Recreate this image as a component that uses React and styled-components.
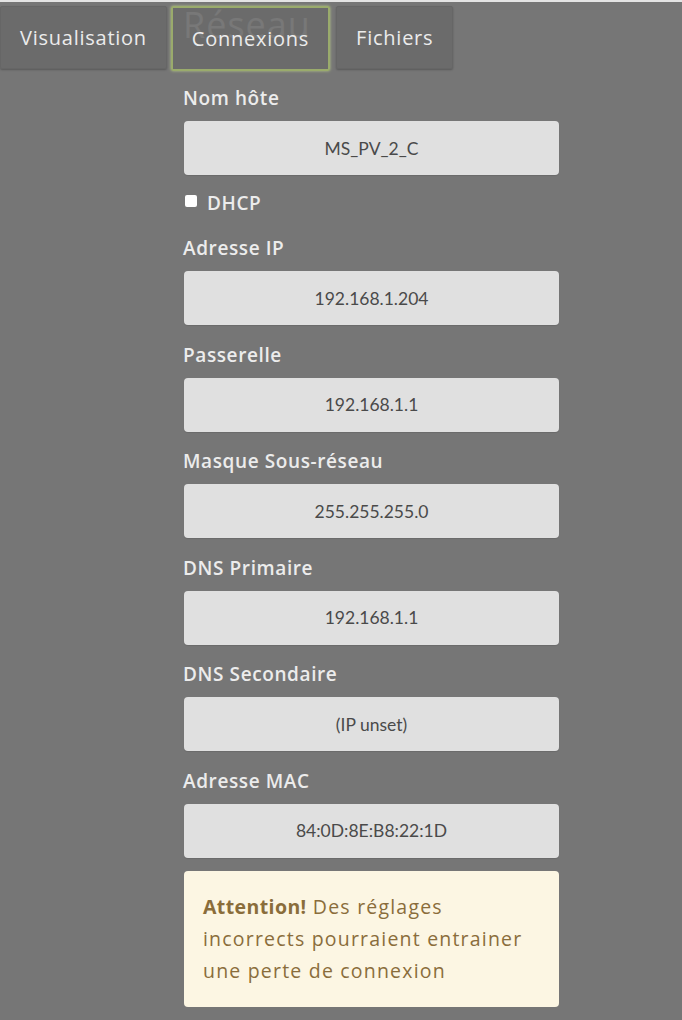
import styled, { createGlobalStyle, css } from "styled-components";

const GlobalStyle = createGlobalStyle`
    html, body {
        margin: 0;
        padding: 0;
        background-color: #767676;
        font-family: "Open Sans", Lato, "Liberation Sans", sans-serif;
    }
`

const Page = styled.div`
    width: 682px;
    min-height: 1020px;
    border-top: 2px solid #e4e4e4;
    position: relative;
`

const TabBar = styled.nav`
    position: absolute;
    top: 4px;
    left: 0;
    display: flex;
    gap: 4px;
`

const Tab = styled.div`
    height: 61px;
    padding: 0 19px;
    display: flex;
    align-items: center;
    font-size: 20px;
    letter-spacing: 0.75px;
    color: #ececec;
    background-color: rgba(96, 96, 96, 0.45);
    border: 1px solid #666;
    border-radius: 2px;
    box-shadow: 0 1px 2px rgba(0, 0, 0, 0.25);
    ${({ $active }) => $active && css`
        border: 2px solid #9aab6c;
        box-shadow: 0 0 3px #b8c98a;
        padding: 0 19px;
        margin-right: 2px;
    `}
`

const Content = styled.main`
    width: 376px;
    margin-left: 183px;
    padding-top: 2px;
    display: flex;
    flex-direction: column;
`

const Title = styled.h1`
    margin: 0;
    font-size: 36px;
    font-weight: 400;
    letter-spacing: 1px;
    line-height: 42px;
    color: #8c8c8c;
    height: 82px;
`

const Label = styled.label`
    display: block;
    font-size: 19px;
    font-weight: 600;
    letter-spacing: 0.6px;
    line-height: 24px;
    color: #ececec;
    margin-bottom: 11px;
`

const Field = styled.div`
    margin-left: 1px;
    height: 54px;
    background-color: #e0e0e0;
    border-radius: 4px;
    display: flex;
    align-items: center;
    justify-content: center;
    font-family: Lato, sans-serif;
    font-size: 17.5px;
    color: #4a4a4a;
    box-shadow: 0 1px 1px rgba(0, 0, 0, 0.1);
`

const Group = styled.div`
    margin-bottom: 17.5px;
`

const CheckRow = styled.div`
    display: flex;
    align-items: center;
    gap: 10px;
    height: 26px;
    margin: 15px 0 20px 2px;
`

const Box = styled.span`
    width: 12px;
    height: 12px;
    background-color: #fff;
    border-radius: 2px;
    margin-top: -5px;
`

const CheckText = styled.span`
    font-size: 19px;
    font-weight: 600;
    letter-spacing: 0.6px;
    color: #ececec;
`

const Alert = styled.div`
    margin: -4px 0 0 1px;
    padding: 20px 19px;
    background-color: #fcf6e3;
    border-radius: 4px;
    color: #8a6d3b;
    font-size: 19.5px;
    letter-spacing: 1.2px;
    line-height: 32px;

    strong {
        font-weight: 700;
        letter-spacing: 0.4px;
    }
`

const fields = [
    ["Adresse IP", "192.168.1.204"],
    ["Passerelle", "192.168.1.1"],
    ["Masque Sous-réseau", "255.255.255.0"],
    ["DNS Primaire", "192.168.1.1"],
    ["DNS Secondaire", "(IP unset)"],
    ["Adresse MAC", "84:0D:8E:B8:22:1D"],
];

export default function App() {
    return (
        <Page>
            <GlobalStyle />
            <Content>
                <Title>Réseau</Title>
                <Label>Nom hôte</Label>
                <Field>MS_PV_2_C</Field>
                <CheckRow>
                    <Box />
                    <CheckText>DHCP</CheckText>
                </CheckRow>
                {fields.map(([label, value]) => (
                    <Group key={label}>
                        <Label>{label}</Label>
                        <Field>{value}</Field>
                    </Group>
                ))}
                <Alert>
                    <strong>Attention!</strong> Des réglages<br />
                    incorrects pourraient entrainer<br />
                    une perte de connexion
                </Alert>
            </Content>
            <TabBar>
                <Tab>Visualisation</Tab>
                <Tab $active>Connexions</Tab>
                <Tab>Fichiers</Tab>
            </TabBar>
        </Page>
    );
}
